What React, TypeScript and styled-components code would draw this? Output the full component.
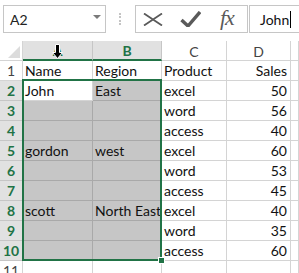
import styled, { createGlobalStyle, css } from "styled-components";

const GREEN = "#217346";

const GlobalStyle = createGlobalStyle`
  html, body {
    margin: 0;
    padding: 0;
    background: #fff;
    overflow: hidden;
  }
  body {
    font-family: Lato, "Open Sans", sans-serif;
  }
`;

const Page = styled.div`
  position: relative;
  width: 299px;
  height: 273px;
  overflow: hidden;
  background: #fff;
`;

const FormulaBar = styled.div`
  height: 41px;
  box-sizing: border-box;
  display: flex;
  align-items: flex-start;
  padding: 5px 0 0 3px;
  overflow: hidden;
  & > * {
    flex-shrink: 0;
  }
`;

const NameBox = styled.div`
  width: 103px;
  height: 28px;
  box-sizing: border-box;
  border: 1px solid #c6c6c6;
  display: flex;
  align-items: center;
  justify-content: space-between;
  padding: 0 4px 0 6px;
  font-size: 14px;
  color: #222;
`;

const DropArrow = styled.span`
  width: 0;
  height: 0;
  border-left: 4px solid transparent;
  border-right: 4px solid transparent;
  border-top: 4px solid #7a7a7a;
  margin-bottom: 4px;
`;

const Grip = styled.div`
  width: 0;
  height: 12px;
  margin: 8px 14px 0 13px;
  border-left: 2px dotted #c4c4c4;
`;

const ButtonBox = styled.div`
  width: 113px;
  height: 28px;
  box-sizing: border-box;
  border: 1px solid #c6c6c6;
  display: flex;
  align-items: center;
  padding-left: 7px;
  color: #5a5a5a;
`;

const IconSlot = styled.span<{ $gap?: number }>`
  display: flex;
  margin-left: ${(p) => p.$gap ?? 0}px;
`;

const Fx = styled.span`
  font-family: "Liberation Serif", serif;
  font-style: italic;
  font-size: 22px;
  margin-left: 19px;
  margin-bottom: 3px;
  color: #5a5a5a;
  letter-spacing: -1px;
`;

const FormulaInput = styled.div`
  width: 80px;
  height: 28px;
  margin-left: 1px;
  box-sizing: border-box;
  border: 1px solid #c6c6c6;
  border-right: none;
  display: flex;
  align-items: center;
  padding-left: 10px;
  font-size: 14px;
  color: #111;
`;

const Caret = styled.span`
  width: 1px;
  height: 17px;
  background: #000;
  margin-left: 1px;
`;

const SheetWrap = styled.div`
  position: relative;
`;

const Sheet = styled.div`
  display: grid;
  grid-template-columns: 23px 70px 69px 65px 64px 1fr;
  grid-auto-rows: 20px;
  font-size: 14px;
  color: #111;
`;

const Corner = styled.div`
  position: relative;
  box-sizing: border-box;
  border-right: 1px solid #d4d4d4;
  border-bottom: 1px solid #d4d4d4;
  background: #fff;
  &::after {
    content: "";
    position: absolute;
    right: 2px;
    bottom: 2px;
    width: 0;
    height: 0;
    border-left: 12px solid transparent;
    border-bottom: 12px solid #dcdcdc;
  }
`;

const ColHead = styled.div<{ $sel?: boolean }>`
  box-sizing: border-box;
  display: flex;
  align-items: center;
  justify-content: center;
  padding-top: 1px;
  border-right: 1px solid #d4d4d4;
  border-bottom: 1px solid #d4d4d4;
  background: #fff;
  color: #444;
  ${(p) =>
    p.$sel &&
    css`
      background: #e1e1e1;
      color: ${GREEN};
      font-weight: bold;
      border-right-color: #c6c6c6;
      border-bottom: 2px solid ${GREEN};
    `}
`;

const RowHead = styled.div<{ $sel?: boolean }>`
  box-sizing: border-box;
  display: flex;
  align-items: flex-end;
  justify-content: center;
  padding-bottom: 1px;
  border-right: 1px solid #d4d4d4;
  border-bottom: 1px solid #d4d4d4;
  background: #fff;
  color: #444;
  ${(p) =>
    p.$sel &&
    css`
      background: #e1e1e1;
      color: ${GREEN};
      font-weight: bold;
      border-bottom-color: #c6c6c6;
    `}
`;

const Cell = styled.div<{ $sel?: boolean; $num?: boolean }>`
  box-sizing: border-box;
  display: flex;
  align-items: flex-end;
  justify-content: ${(p) => (p.$num ? "flex-end" : "flex-start")};
  padding: 0 3px 1px 2px;
  border-right: 1px solid #d4d4d4;
  border-bottom: 1px solid #d4d4d4;
  white-space: nowrap;
  overflow: hidden;
  background: #fff;
  ${(p) =>
    p.$sel &&
    css`
      background: #c6c6c6;
      border-color: #a9a9a9;
    `}
`;

const Selection = styled.div`
  position: absolute;
  left: 22px;
  top: 38px;
  width: 140px;
  height: 182px;
  box-sizing: border-box;
  border: 2px solid ${GREEN};
  pointer-events: none;
`;

const FillHandle = styled.div`
  position: absolute;
  left: 158px;
  top: 216px;
  width: 7px;
  height: 7px;
  box-sizing: border-box;
  background: ${GREEN};
  border: 1px solid #fff;
`;

const Pointer = styled.svg`
  position: absolute;
  left: 52px;
  top: 44px;
`;

const rows: [string, string, string, string][] = [
  ["Name", "Region", "Product", "Sales"],
  ["John", "East", "excel", "50"],
  ["", "", "word", "56"],
  ["", "", "access", "40"],
  ["gordon", "west", "excel", "60"],
  ["", "", "word", "53"],
  ["", "", "access", "45"],
  ["scott", "North East", "excel", "40"],
  ["", "", "word", "35"],
  ["", "", "access", "60"],
  ["", "", "", ""],
];

export default function App() {
  return (
    <Page>
      <GlobalStyle />
      <FormulaBar>
        <NameBox>
          <span>A2</span>
          <DropArrow />
        </NameBox>
        <Grip />
        <ButtonBox>
          <IconSlot>
            <svg width="20" height="13" viewBox="0 0 20 13">
              <path d="M1 0.5 L19 12.5 M19 0.5 L1 12.5" stroke="currentColor" strokeWidth="1.8" fill="none" />
            </svg>
          </IconSlot>
          <IconSlot $gap={17}>
            <svg width="21" height="16" viewBox="0 0 21 16">
              <path d="M1.5 9 L8 15 L20 1" stroke="currentColor" strokeWidth="3.4" fill="none" strokeLinejoin="miter" />
            </svg>
          </IconSlot>
          <Fx>fx</Fx>
        </ButtonBox>
        <FormulaInput>
          <span>John</span>
          <Caret />
        </FormulaInput>
      </FormulaBar>
      <SheetWrap>
        <Sheet>
          <Corner />
          <ColHead $sel>A</ColHead>
          <ColHead $sel>B</ColHead>
          <ColHead>C</ColHead>
          <ColHead>D</ColHead>
          <ColHead />
          {rows.map((r, i) => {
            const n = i + 1;
            const sel = n >= 2 && n <= 10;
            return [
              <RowHead key={`h${n}`} $sel={sel}>
                {n}
              </RowHead>,
              <Cell key={`a${n}`} $sel={sel && n !== 2}>
                {r[0]}
              </Cell>,
              <Cell key={`b${n}`} $sel={sel}>
                {r[1]}
              </Cell>,
              <Cell key={`c${n}`}>{r[2]}</Cell>,
              <Cell key={`d${n}`} $num>
                {r[3]}
              </Cell>,
              <Cell key={`e${n}`} />,
            ];
          })}
        </Sheet>
        <Selection />
        <FillHandle />
      </SheetWrap>
      <Pointer width="11" height="15" viewBox="0 0 11 15">
        <path d="M3.5 0.5 H7.5 V8.5 H10.5 L5.5 14.5 L0.5 8.5 H3.5 Z" fill="#000" stroke="#fff" strokeWidth="1" />
      </Pointer>
    </Page>
  );
}
